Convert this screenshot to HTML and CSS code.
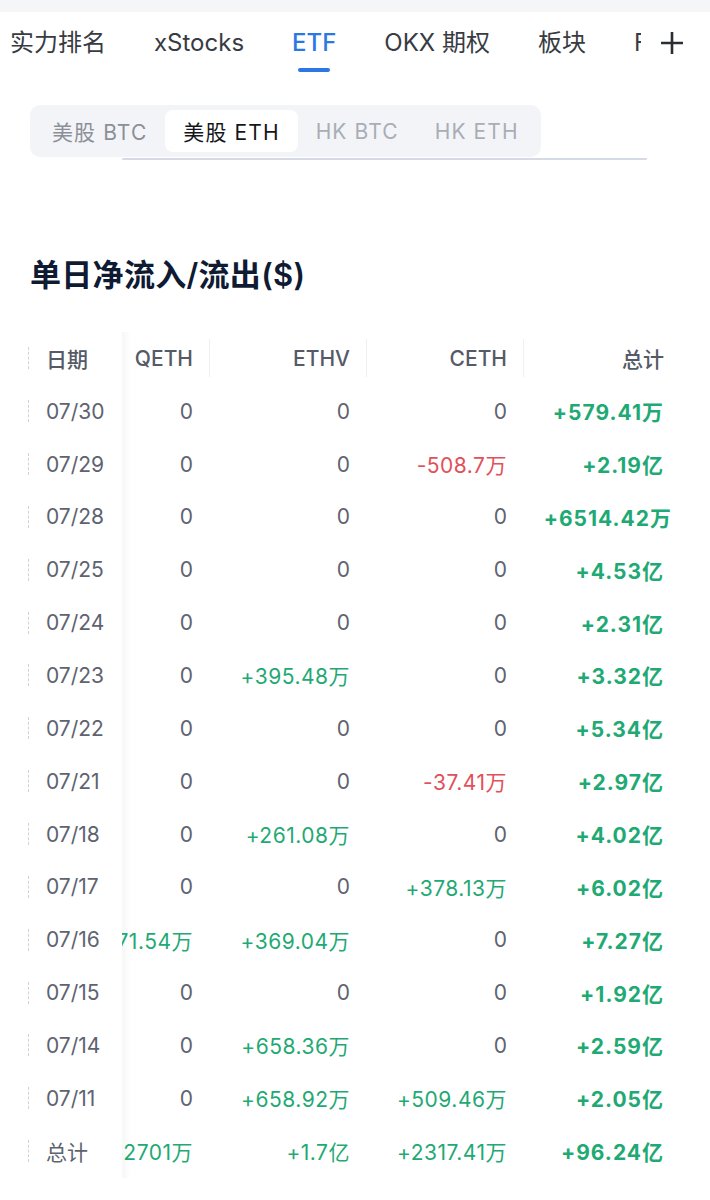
FILE: index.html
```html
<!DOCTYPE html>
<html lang="zh-CN">
<head>
<meta charset="utf-8">
<title>ETF</title>
<link rel="stylesheet" href="styles.css">
</head>
<body>
<div class="topbar"></div>
<div class="tabbar">
  <div class="tabs">
    <div class="tab">实力排名</div>
    <div class="tab">xStocks</div>
    <div class="tab active">ETF</div>
    <div class="tab">OKX 期权</div>
    <div class="tab">板块</div>
    <div class="tab">Fear</div>
  </div>
  <svg class="plus" width="24" height="24" viewBox="0 0 24 24"><path d="M12 1v22M1 12h22" stroke="#2a2d33" stroke-width="2.6" fill="none"/></svg>
</div>

<div class="segwrap">
  <div class="seg">
    <div class="seg-item">美股 BTC</div>
    <div class="seg-item on">美股 ETH</div>
    <div class="seg-item dim">HK BTC</div>
    <div class="seg-item dim">HK ETH</div>
  </div>
  <div class="scrollline"></div>
</div>

<h2 class="title">单日净流入/流出($)</h2>

<div class="table">
  <div class="row head">
    <div class="c date"><span class="mark"></span>日期</div>
    <div class="c num q sep">QETH</div>
    <div class="c num sep">ETHV</div>
    <div class="c num sep">CETH</div>
    <div class="c num">总计</div>
  </div>
  <div class="row"><div class="c date"><span class="mark"></span>07/30</div><div class="c num q">0</div><div class="c num">0</div><div class="c num">0</div><div class="c num tot">+579.41万</div></div>
  <div class="row"><div class="c date"><span class="mark"></span>07/29</div><div class="c num q">0</div><div class="c num">0</div><div class="c num neg">-508.7万</div><div class="c num tot">+2.19亿</div></div>
  <div class="row"><div class="c date"><span class="mark"></span>07/28</div><div class="c num q">0</div><div class="c num">0</div><div class="c num">0</div><div class="c num tot wide">+6514.42万</div></div>
  <div class="row"><div class="c date"><span class="mark"></span>07/25</div><div class="c num q">0</div><div class="c num">0</div><div class="c num">0</div><div class="c num tot">+4.53亿</div></div>
  <div class="row"><div class="c date"><span class="mark"></span>07/24</div><div class="c num q">0</div><div class="c num">0</div><div class="c num">0</div><div class="c num tot">+2.31亿</div></div>
  <div class="row"><div class="c date"><span class="mark"></span>07/23</div><div class="c num q">0</div><div class="c num pos">+395.48万</div><div class="c num">0</div><div class="c num tot">+3.32亿</div></div>
  <div class="row"><div class="c date"><span class="mark"></span>07/22</div><div class="c num q">0</div><div class="c num">0</div><div class="c num">0</div><div class="c num tot">+5.34亿</div></div>
  <div class="row"><div class="c date"><span class="mark"></span>07/21</div><div class="c num q">0</div><div class="c num">0</div><div class="c num neg">-37.41万</div><div class="c num tot">+2.97亿</div></div>
  <div class="row"><div class="c date"><span class="mark"></span>07/18</div><div class="c num q">0</div><div class="c num pos">+261.08万</div><div class="c num">0</div><div class="c num tot">+4.02亿</div></div>
  <div class="row"><div class="c date"><span class="mark"></span>07/17</div><div class="c num q">0</div><div class="c num">0</div><div class="c num pos">+378.13万</div><div class="c num tot">+6.02亿</div></div>
  <div class="row"><div class="c date"><span class="mark"></span>07/16</div><div class="c num q pos">+71.54万</div><div class="c num pos">+369.04万</div><div class="c num">0</div><div class="c num tot">+7.27亿</div></div>
  <div class="row"><div class="c date"><span class="mark"></span>07/15</div><div class="c num q">0</div><div class="c num">0</div><div class="c num">0</div><div class="c num tot">+1.92亿</div></div>
  <div class="row"><div class="c date"><span class="mark"></span>07/14</div><div class="c num q">0</div><div class="c num pos">+658.36万</div><div class="c num">0</div><div class="c num tot">+2.59亿</div></div>
  <div class="row"><div class="c date"><span class="mark"></span>07/11</div><div class="c num q">0</div><div class="c num pos">+658.92万</div><div class="c num pos">+509.46万</div><div class="c num tot">+2.05亿</div></div>
  <div class="row"><div class="c date"><span class="mark"></span>总计</div><div class="c num q pos">+2701万</div><div class="c num pos">+1.7亿</div><div class="c num pos">+2317.41万</div><div class="c num tot">+96.24亿</div></div>
</div>
</body>
</html>
```

FILE: styles.css
```css
* { box-sizing: border-box; }
html, body { margin: 0; padding: 0; background: #fff; }
body {
  font-family: Inter, "Noto Sans CJK SC", sans-serif;
  color: #5e6370;
  width: 710px;
  overflow: hidden;
}
.topbar { height: 12px; background: #f5f6f8; }

.tabbar {
  display: flex;
  align-items: flex-start;
  height: 62px;
}
.tabs {
  display: flex;
  gap: 48px;
  padding-left: 10px;
  width: 641px;
  overflow: hidden;
  flex-shrink: 0;
}
.tab {
  position: relative;
  font-size: 24px;
  line-height: 62px;
  height: 62px;
  color: #383b42;
  white-space: nowrap;
  flex-shrink: 0;
}
.tab.active { color: #2b78e4; font-weight: 500; }
.tab.active::after {
  content: "";
  position: absolute;
  left: 50%;
  bottom: 2px;
  width: 32px;
  margin-left: -16px;
  height: 4px;
  border-radius: 2px;
  background: #2b78e4;
}
.plus { margin-left: 19px; margin-top: 19px; }

.segwrap { padding-top: 31px; }
.seg {
  display: flex;
  margin-left: 30px;
  width: 511px;
  height: 52px;
  padding: 5px 4px;
  background: #f3f4f7;
  border-radius: 10px;
}
.seg-item {
  display: flex;
  align-items: center;
  padding: 0 18px;
  font-size: 21px;
  letter-spacing: 1.1px;
  color: #8b8f98;
  white-space: nowrap;
  border-radius: 8px;
  flex-shrink: 0;
}
.seg-item.on { background: #fff; color: #14161b; }
.seg-item.dim { color: #a9adb5; }
.scrollline {
  margin-left: 122px;
  margin-top: 1px;
  width: 525px;
  height: 2px;
  border-radius: 1px;
  background: #d5dae4;
}

.title {
  margin: 95px 0 0 30px;
  font-size: 31px;
  line-height: 40px;
  font-weight: 600;
  color: #0f1a33;
  letter-spacing: 0.3px;
}

.table { margin: 37px 0 0 28px; }
.row {
  display: grid;
  grid-template-columns: 94px 88px 157px 157px 157px;
  height: 52.85px;
}
.c {
  display: flex;
  align-items: center;
  height: 52.85px;
  font-size: 21px;
  white-space: nowrap;
  color: #5e6370;
}
.date { background: #fff; }
.mark {
  display: inline-block;
  width: 1px;
  height: 22px;
  margin-right: 17px;
  border-left: 1px dashed #cfd2d6;
}
.num {
  justify-content: flex-end;
  padding-right: 17px;
  overflow: hidden;
}
.q {
  background: linear-gradient(to right, rgba(0, 0, 0, 0.035), rgba(0, 0, 0, 0) 9px);
}
.head .c { font-weight: 500; color: #555a66; }
.head .sep {
  background-image: linear-gradient(#eff0f2, #eff0f2);
  background-size: 1px 38px;
  background-position: right center;
  background-repeat: no-repeat;
}
.head .q.sep {
  background: linear-gradient(#eff0f2, #eff0f2) right center / 1px 38px no-repeat,
              linear-gradient(to right, rgba(0, 0, 0, 0.035), rgba(0, 0, 0, 0) 9px);
}
.pos { color: #1fa974; letter-spacing: 0.5px; }
.neg { color: #e2505a; letter-spacing: 0.5px; }
.tot { color: #1fa974; font-weight: 700; letter-spacing: 1px; }
.tot.wide { padding-right: 9px; }
```
